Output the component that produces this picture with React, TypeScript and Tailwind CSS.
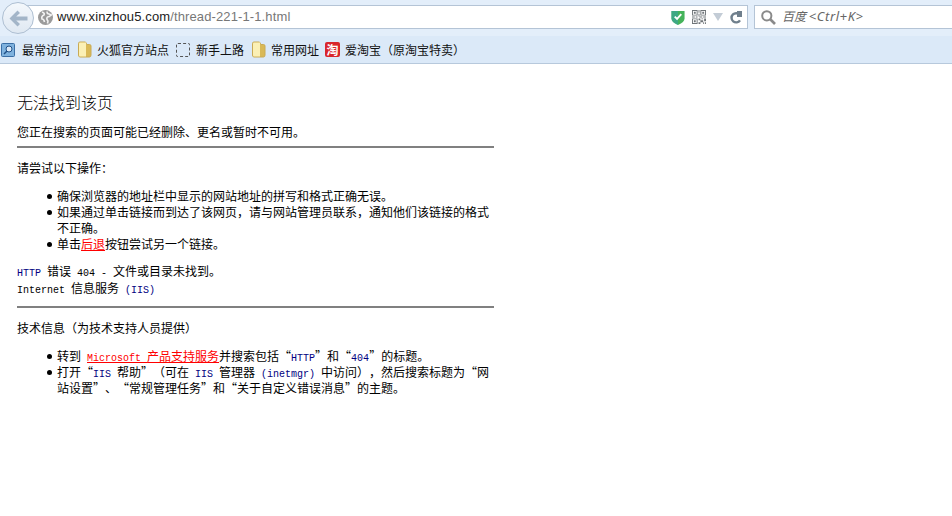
const mono = "font-['Liberation_Mono',monospace] text-[10px] leading-none";
const navy = "font-['Liberation_Mono',monospace] text-[10px] leading-none text-[#000080]";
const bullet = "relative before:absolute before:-left-[10px] before:top-[6px] before:size-[5px] before:rounded-full before:bg-black";

function Folder() {
  return (
    <svg width="15" height="17" viewBox="0 0 15 17" className="shrink-0">
      <path d="M1.5 2.5 Q1.5 1 3 1 H8 Q9 1 9.5 2.5 L10 3.5 H12.5 Q14 3.5 14 5 V14 Q14 16 12.5 16 H3 Q1.5 16 1.5 14 Z" fill="#d9b957" stroke="#c9aa55" />
      <path d="M2 2.5 Q2 1.5 3 1.5 H9 V15.5 H3 Q2 15.5 2 14 Z" fill="#fbf0b5" />
    </svg>
  );
}

function Bookmark({ icon, label, width }: { icon: React.ReactNode; label: string; width: string }) {
  return (
    <div className={`flex items-center ${width}`}>
      {icon}
      <span className="text-xs text-[#111] whitespace-nowrap">{label}</span>
    </div>
  );
}

function QrIcon() {
  return (
    <svg width="14" height="14" viewBox="0 0 15 15" fill="#6f7478">
      <path d="M0 0h6v6H0zM1 1v4h4V1zM9 0h6v6H9zM10 1v4h4V1zM0 9h6v6H0zM1 10v4h4v-4z" fillRule="evenodd" />
      <path d="M2 2h2v2H2zM11 2h2v2h-2zM2 11h2v2H2zM7 0h1v3H7zM7 4h1v3H7zM8 7h3v1H8zM12 7h3v1h-3zM0 7h3v1H0zM4 7h2v1H4zM7 9h2v2H7zM10 9h2v1h-2zM13 9h2v3h-2zM9 11h3v2H9zM7 13h2v2H7zM12 13h1v2h-1zM14 13h1v2h-1z" />
    </svg>
  );
}

function Shield() {
  return (
    <svg width="14" height="15" viewBox="0 0 14 16">
      <path d="M0 1 H14 V9 Q14 13 7 16 Q0 13 0 9 Z" fill="#45b35a" />
      <path d="M0 1 H7 V16 Q0 13 0 9 Z" fill="#3aa0a0" opacity="0.6" />
      <path d="M3.5 7 L6 9.5 L10.5 4.5" fill="none" stroke="#fff" strokeWidth="2" />
    </svg>
  );
}

function GlobeIcon() {
  return (
    <svg width="15" height="15" viewBox="0 0 15 15" className="shrink-0">
      <circle cx="7.5" cy="7.5" r="7.5" fill="#9b9b9b" />
      <path d="M4 2 Q7 3 6 5 Q3 6 4 9 Q6 9 6.5 12 M9 1.5 Q9 4 11 4 L13.5 5 Q11 7 9.5 7 Q8 9 10 11 L9.5 13.5" fill="none" stroke="#f2f2f2" strokeWidth="1.6" />
    </svg>
  );
}

function ReloadIcon() {
  return (
    <svg width="12" height="13" viewBox="0 0 12 13">
      <path d="M9.8 4 A4.6 4.6 0 1 0 10 9.3" fill="none" stroke="#6f7f8c" strokeWidth="2.4" />
      <path d="M7 0 H12 V6 H7 Z" fill="#6f7f8c" />
    </svg>
  );
}

function Toolbar() {
  return (
    <div className="h-16 bg-[#dbe9f8] border-b border-[#b7c9dc]">
      {/* url row */}
      <div className="h-[36px] bg-[#e3eefa] flex items-start pt-[5px]">
        <div className="relative w-[732px] ml-[16px] h-[24px] bg-white border border-[#b4c4d6] flex items-center pl-[21px] pr-[5px]">
          <div className="absolute -left-[15px] -top-[4px] w-[32px] h-[32px] rounded-full bg-gradient-to-b from-[#f4f8fc] to-[#dfe8f2] border border-[#aebfd2] flex items-center justify-center">
            <svg width="19" height="17" viewBox="0 0 19 17">
              <path d="M8.5 0.5 L0.5 8.5 L8.5 16.5 L11 14 L7.2 10.5 H18.5 V6.5 H7.2 L11 3 Z" fill="#a3b5c8" />
            </svg>
          </div>
          <GlobeIcon />
          <span className="ml-[4px] text-[13px] tracking-[0.12px] font-['Liberation_Sans',sans-serif] text-[#777] whitespace-nowrap">
            <span className="text-[#222]">www.xinzhou5.com</span>/thread-221-1-1.html
          </span>
          <div className="ml-auto flex items-center">
            <Shield />
            <div className="ml-[7px]"><QrIcon /></div>
            <div className="ml-[7px] w-0 h-0 border-l-[5px] border-r-[5px] border-t-[8px] border-l-transparent border-r-transparent border-t-[#c3ccd6]" />
            <div className="ml-[7px]"><ReloadIcon /></div>
          </div>
        </div>
        <div className="ml-[6px] flex-1 h-[24px] bg-white border border-[#b4c4d6] border-r-0 flex items-center pl-[6px]">
          <svg width="15" height="15" viewBox="0 0 15 15" className="shrink-0">
            <circle cx="5.8" cy="5.8" r="4.6" fill="none" stroke="#8a8a8a" strokeWidth="2" />
            <path d="M9 9 L14 14" stroke="#8a8a8a" strokeWidth="2.6" />
          </svg>
          <span className="ml-[6px] text-xs italic text-[#666] whitespace-nowrap">
            百度 <span className="text-[13px] tracking-[0.6px] font-['Noto_Sans',sans-serif]">&lt;Ctrl+K&gt;</span>
          </span>
        </div>
      </div>
      {/* bookmarks */}
      <div className="h-[27px] flex items-center pl-[1px]">
        <Bookmark
          width="w-[76px] gap-[6px]"
          label="最常访问"
          icon={
            <svg width="15" height="16" viewBox="0 0 15 16" className="shrink-0">
              <rect x="0.5" y="1.5" width="13" height="13" rx="1" fill="#7fb2de" stroke="#3a6ea5" />
              <circle cx="8" cy="7" r="3" fill="#dbe9f8" stroke="#1f4f86" />
              <path d="M6 9 L3 12" stroke="#1f4f86" strokeWidth="1.5" />
            </svg>
          }
        />
        <Bookmark width="w-[99px] gap-[5px]" label="火狐官方站点" icon={<Folder />} />
        <Bookmark
          width="w-[75px] gap-[6px]"
          label="新手上路"
          icon={<div className="w-[14px] h-[14px] rounded-[2px] border border-dashed border-[#555] shrink-0" />}
        />
        <Bookmark width="w-[74px] gap-[5px]" label="常用网址" icon={<Folder />} />
        <Bookmark
          width="gap-[5px]"
          label="爱淘宝（原淘宝特卖）"
          icon={
            <div className="w-[15px] h-[15px] rounded-[2px] bg-[#d9262b] text-white text-[12px] leading-[15px] text-center font-bold shrink-0">淘</div>
          }
        />
      </div>
    </div>
  );
}

export default function App() {
  return (
    <div lang="zh-CN" className="w-[952px] h-[516px] bg-white overflow-hidden font-['Noto_Sans_CJK_SC',sans-serif] [text-spacing-trim:space-all]">
      <Toolbar />
      <main className="w-[477px] ml-[17px] text-xs leading-[16px] text-black">
        <h1 className="mt-[27px] text-base leading-[22px] font-light">无法找到该页</h1>
        <p className="mt-[11px]">您正在搜索的页面可能已经删除、更名或暂时不可用。</p>
        <hr className="mt-[6px] border-t-2 border-[#808080]" />
        <p className="mt-[12px]">请尝试以下操作：</p>
        <ul className="mt-[12px] pl-[40px]">
          <li className={bullet}>确保浏览器的地址栏中显示的网站地址的拼写和格式正确无误。</li>
          <li className={bullet}>如果通过单击链接而到达了该网页，请与网站管理员联系，通知他们该链接的格式不正确。</li>
          <li className={bullet}>
            单击<span className="text-[#ff0000] underline">后退</span>按钮尝试另一个链接。
          </li>
        </ul>
        <p className="mt-[10px] leading-[17px] whitespace-nowrap">
          <span className={navy}>HTTP </span>错误<span className={mono}> 404 - </span>文件或目录未找到。
          <br />
          <span className={mono}>Internet </span>信息服务<span className={navy}> (IIS)</span>
        </p>
        <hr className="mt-[10px] border-t-2 border-[#808080]" />
        <p className="mt-[12px]">技术信息（为技术支持人员提供）</p>
        <ul className="mt-[12px] pl-[40px]">
          <li className={bullet}>
            转到<span className={mono}> </span><span className="text-[#ff0000] underline"><span className={mono}>Microsoft </span>产品支持服务</span>并搜索包括“<span className={navy}>HTTP</span>”和“<span className={navy}>404</span>”的标题。
          </li>
          <li className={bullet}>
            打开“<span className={navy}>IIS </span>帮助”（可在<span className={navy}> IIS </span>管理器<span className={navy}> (inetmgr) </span>中访问），然后搜索标题为“网站设置”、“常规管理任务”和“关于自定义错误消息”的主题。
          </li>
        </ul>
      </main>
    </div>
  );
}
